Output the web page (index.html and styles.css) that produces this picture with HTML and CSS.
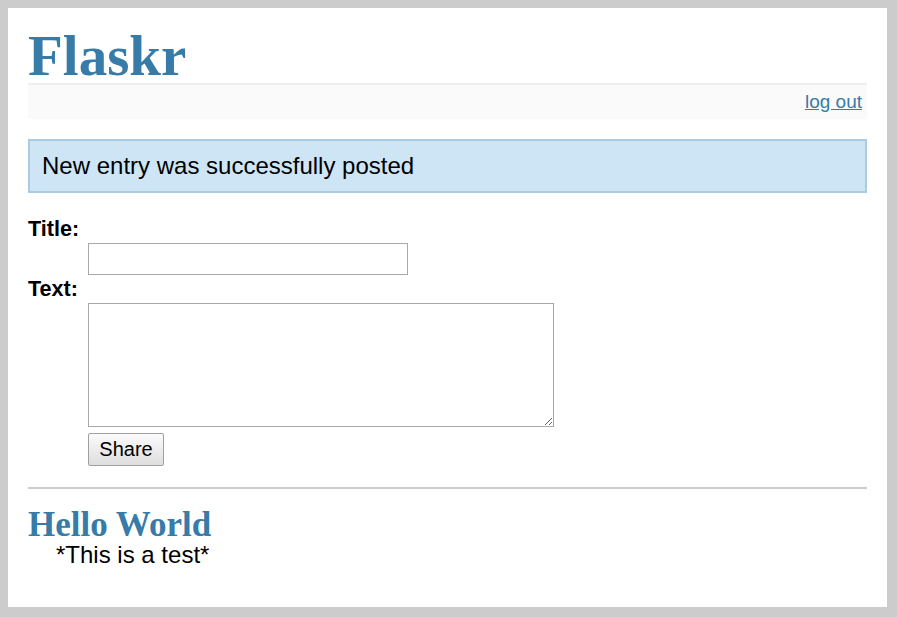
FILE: index.html
```html
<!doctype html>
<html>
<head>
<meta charset="utf-8">
<title>Flaskr</title>
<link rel="stylesheet" href="styles.css">
</head>
<body>
<div class="page">
  <h1 class="title">Flaskr</h1>
  <div class="metanav"><a href="#">log out</a></div>
  <div class="flash">New entry was successfully posted</div>
  <form class="add-entry" action="#" method="post">
    <dl class="fields">
      <dt class="label">Title:</dt>
      <dd class="field"><input class="text-input" type="text" name="title"></dd>
      <dt class="label">Text:</dt>
      <dd class="field"><textarea class="text-area" name="text"></textarea></dd>
      <dd class="field submit-row"><input class="share" type="submit" value="Share"></dd>
    </dl>
  </form>
  <ul class="entries">
    <li class="entry">
      <h2 class="entry-title">Hello World</h2>
      <div class="entry-text">*This is a test*</div>
    </li>
  </ul>
</div>
</body>
</html>
```

FILE: styles.css
```css
html, body {
  margin: 0;
  padding: 0;
  background: #eeeeee;
}

body {
  font-family: "Liberation Sans", Arial, sans-serif;
  font-size: 24px;
  color: #000;
}

a {
  color: #377ba8;
}

.page {
  box-sizing: border-box;
  height: 617px;
  width: 897px;
  border-style: solid;
  border-color: #cccccc;
  border-width: 8px 10px 10px 8px;
  padding: 20px 20px 0 20px;
  background: #ffffff;
}

.title {
  margin: 0;
  font-family: "Liberation Serif", Georgia, serif;
  font-weight: bold;
  font-size: 57px;
  line-height: 55px;
  height: 55px;
  color: #377ba8;
  border-bottom: 2px solid #eeeeee;
}

.metanav {
  text-align: right;
  font-size: 19px;
  line-height: 22px;
  padding: 6px 5px 6px 6px;
  margin-bottom: 20px;
  background: #fafafa;
}

.flash {
  background: #cee5f5;
  border: 2px solid #aacbe2;
  padding: 12px 12px;
  font-size: 24px;
  line-height: 26px;
}

.add-entry {
  font-size: 21.6px;
  border-bottom: 2px solid #cccccc;
}

.fields {
  margin: 21px 0 21px 0;
  font-weight: bold;
}

.label {
  line-height: 29px;
  height: 29px;
}

.label + .field + .label {
  height: 28px;
  line-height: 28px;
}

.field {
  margin: 0 0 0 60px;
}

.text-input {
  display: block;
  box-sizing: border-box;
  width: 320px;
  height: 32px;
  margin: 0;
  border: 1px solid #a9a9a9;
  font-family: "Liberation Sans", Arial, sans-serif;
  font-size: 20px;
}

.text-area {
  display: block;
  box-sizing: border-box;
  width: 466px;
  height: 124px;
  margin: 0;
  border: 1px solid #a9a9a9;
  font-family: "Liberation Mono", monospace;
  font-size: 18px;
}

.submit-row {
  padding-top: 6px;
}

.share {
  display: block;
  box-sizing: border-box;
  width: 76px;
  height: 33px;
  margin: 0;
  padding: 0 6px;
  border: 1px solid #a0a0a0;
  border-radius: 2px;
  background: linear-gradient(#fbfbfb, #dedede);
  font-family: "Liberation Sans", Arial, sans-serif;
  font-size: 20px;
  font-weight: normal;
  color: #000;
}

.entries {
  list-style: none;
  margin: 0;
  padding: 0;
}

.entry {
  margin: 19px 28px 0 28px;
}

.entry-title {
  margin: 0 0 0 -28px;
  font-family: "Liberation Serif", Georgia, serif;
  font-weight: bold;
  font-size: 35px;
  line-height: 34px;
  color: #377ba8;
}

.entry-text {
  font-size: 24px;
  line-height: 26px;
}
```
